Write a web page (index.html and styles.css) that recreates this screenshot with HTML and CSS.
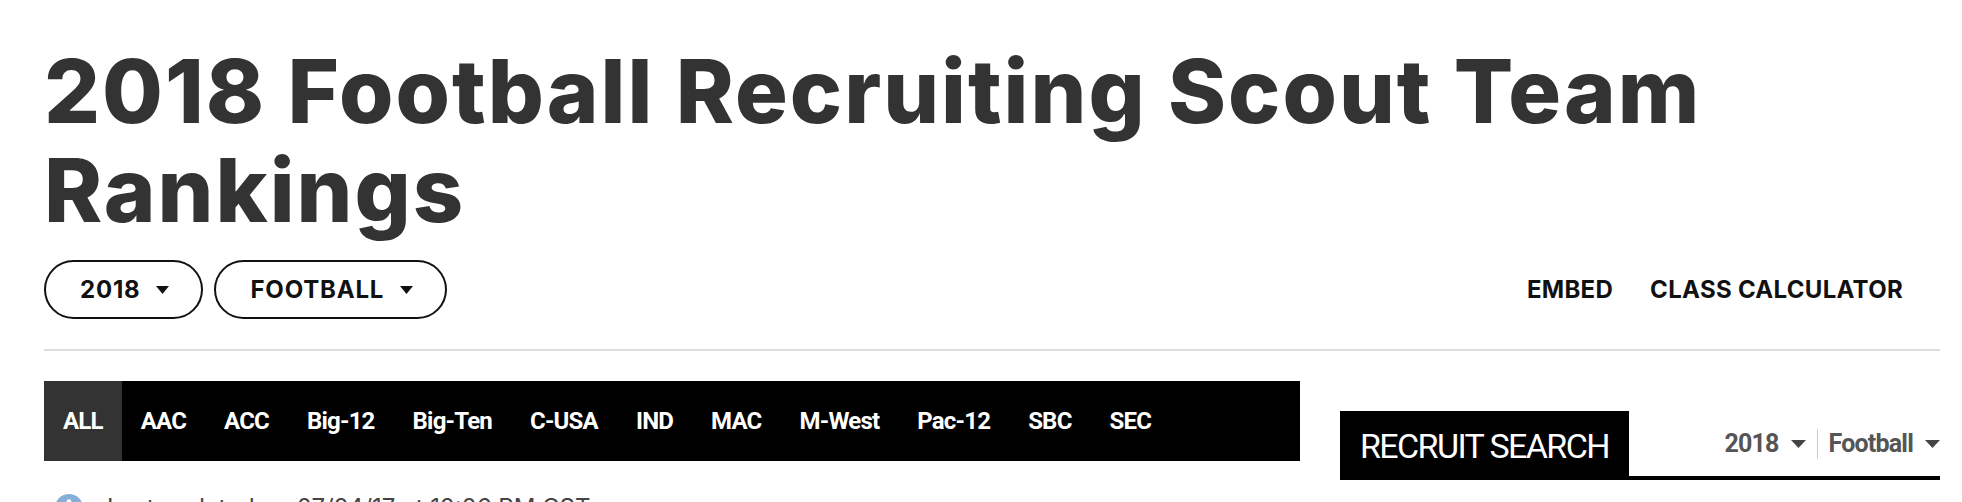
FILE: index.html
```html
<!DOCTYPE html>
<html lang="en">
<head>
    <meta charset="UTF-8">
    <meta name="viewport" content="width=device-width, initial-scale=1.0">
    <title>2018 Football Recruiting Scout Team Rankings</title>
    <link rel="stylesheet" href="styles.css">
</head>
<body>
    <div class="page">
        <h1 class="page-title">2018 Football Recruiting Scout Team Rankings</h1>

        <div class="toolbar">
            <div class="pills">
                <button class="pill">2018
                    <svg class="caret" width="13" height="8" viewBox="0 0 13 8"><path d="M0 0h13L6.5 8z" fill="#111"/></svg>
                </button>
                <button class="pill">FOOTBALL
                    <svg class="caret" width="13" height="8" viewBox="0 0 13 8"><path d="M0 0h13L6.5 8z" fill="#111"/></svg>
                </button>
            </div>
            <nav class="links">
                <a href="#">EMBED</a>
                <a href="#">CLASS CALCULATOR</a>
            </nav>
        </div>

        <hr class="divider">

        <div class="content">
            <div class="main">
                <ul class="conf-tabs">
                    <li class="active">ALL</li>
                    <li>AAC</li>
                    <li>ACC</li>
                    <li>Big-12</li>
                    <li>Big-Ten</li>
                    <li>C-USA</li>
                    <li>IND</li>
                    <li>MAC</li>
                    <li>M-West</li>
                    <li>Pac-12</li>
                    <li>SBC</li>
                    <li>SEC</li>
                </ul>

                <p class="updated">
                    <svg class="info" width="28" height="28" viewBox="0 0 28 28">
                        <circle cx="14" cy="14" r="14" fill="#86aed6"/>
                        <circle cx="14" cy="7.5" r="2.3" fill="#fff"/>
                        <rect x="12" y="11.5" width="4" height="10.5" fill="#fff"/>
                    </svg>
                    <span>Last updated on 07/24/17 at 12:06 PM CST</span>
                </p>
            </div>

            <aside class="side">
                <div class="side-head">
                    <h3>RECRUIT SEARCH</h3>
                    <div class="side-filters">
                        <span class="filter">2018
                            <svg width="15" height="8" viewBox="0 0 15 8"><path d="M0 0h15L7.5 8z" fill="#444"/></svg>
                        </span>
                        <span class="sep"></span>
                        <span class="filter">Football
                            <svg width="15" height="8" viewBox="0 0 15 8"><path d="M0 0h15L7.5 8z" fill="#444"/></svg>
                        </span>
                    </div>
                </div>
            </aside>
        </div>
    </div>
</body>
</html>
```

FILE: styles.css
```css
body {
    margin: 0;
    padding: 0;
    background-color: #fff;
    font-family: Inter, "Noto Sans", sans-serif;
    color: #333;
}

.page {
    padding: 42px 22px 0 44px;
}

.page-title {
    margin: 0;
    font-size: 88px;
    font-weight: 800;
    line-height: 99px;
    color: #333;
    letter-spacing: 2px;
}

.toolbar {
    display: flex;
    justify-content: space-between;
    align-items: center;
    margin-top: 20px;
}

.pills {
    display: flex;
    gap: 11px;
}

.pill {
    display: flex;
    align-items: center;
    gap: 16px;
    height: 59px;
    padding: 0 32px 0 34px;
    border: 2px solid #111;
    border-radius: 30px;
    background-color: #fff;
    font-family: Inter, sans-serif;
    font-size: 24px;
    font-weight: 700;
    letter-spacing: 0.8px;
    color: #111;
    cursor: pointer;
}

.links {
    display: flex;
    gap: 37px;
    padding-right: 37px;
}

.links a {
    font-size: 24px;
    font-weight: 700;
    letter-spacing: 0.3px;
    color: #111;
    text-decoration: none;
}

.divider {
    margin: 30px 0 0;
    border: none;
    border-top: 2px solid #ddd;
}

.content {
    display: flex;
    gap: 40px;
}

.main {
    flex: 1;
}

.conf-tabs {
    display: flex;
    list-style-type: none;
    margin: 30px 0 0;
    padding: 0;
    height: 80px;
    background-color: #000;
}

.conf-tabs li {
    padding: 0 19px;
    line-height: 80px;
    font-family: Roboto, sans-serif;
    font-size: 24px;
    font-weight: 700;
    letter-spacing: -0.8px;
    color: #fff;
}

.conf-tabs li.active {
    background-color: #333;
}

.updated {
    display: flex;
    align-items: flex-start;
    gap: 24px;
    margin: 32px 0 0 11px;
    font-size: 24px;
    line-height: 29px;
    color: #444;
}

.updated .info {
    flex-shrink: 0;
    margin-top: 1px;
}

.side {
    width: 600px;
    margin-top: 60px;
}

.side-head {
    display: flex;
    justify-content: space-between;
    align-items: center;
    border-bottom: 4px solid #000;
}

.side-head h3 {
    margin: 0;
    padding: 0 20px;
    height: 65px;
    line-height: 70px;
    background-color: #000;
    font-family: Roboto, sans-serif;
    font-size: 34px;
    font-weight: 400;
    letter-spacing: -1.6px;
    color: #fff;
}

.side-filters {
    display: flex;
    align-items: center;
    gap: 11px;
}

.filter {
    display: flex;
    align-items: center;
    gap: 12px;
    font-family: Roboto, sans-serif;
    font-size: 25px;
    font-weight: 700;
    letter-spacing: -0.8px;
    color: #555;
}

.sep {
    width: 1px;
    height: 30px;
    background-color: #ccc;
}
```
